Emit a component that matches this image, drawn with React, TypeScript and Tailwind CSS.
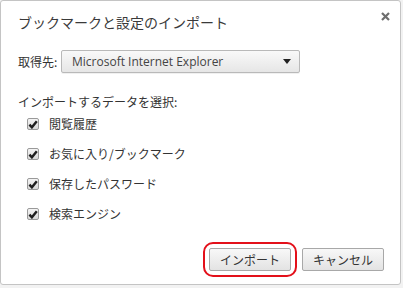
const jp = "font-['Noto_Sans_CJK_JP','Noto_Sans',sans-serif]";

function CheckBox() {
  return (
    <span className="flex h-[12px] w-[12px] items-center justify-center rounded-[2px] border border-[#9a9a9a] bg-gradient-to-b from-[#f4f4f4] to-[#d8d8d8]">
      <svg width="10" height="9" viewBox="0 0 10 9">
        <path d="M1.4 4.6 L3.9 7.3 L8.8 1.2" fill="none" stroke="#1e1e1e" strokeWidth="2.4" strokeLinejoin="miter" />
      </svg>
    </span>
  );
}

const items = ["閲覧履歴", "お気に入り/ブックマーク", "保存したパスワード", "検索エンジン"];

export default function App() {
  return (
    <div className={`h-[288px] w-[403px] bg-[#f2f2f2] ${jp}`}>
      <div className="relative flex h-[285px] w-[401px] flex-col rounded-[3px] border border-[#c4c4c4] bg-white text-[#333]">
        {/* close */}
        <button className="absolute right-[10px] top-[11px] flex h-[9px] w-[9px] items-center justify-center">
          <svg width="9" height="9" viewBox="0 0 9 9">
            <path d="M1 1 L8 8 M8 1 L1 8" stroke="#6e6e6e" strokeWidth="2.2" />
          </svg>
        </button>

        <div className="px-[17px] pt-[11px] text-[14px] leading-[20px] text-[#3a3a3a]">
          ブックマークと設定のインポート
        </div>

        <div className="mt-[18px] flex items-center px-[17px]">
          <span className="w-[43px] text-[12px] leading-[16px]">取得先:</span>
          <div className="flex h-[23px] w-[239px] items-center justify-between rounded-[2px] border border-[#b9b9b9] bg-gradient-to-b from-[#f9f9f9] to-[#e6e6e6] pl-[10px] pr-[8px] shadow-[0_1px_0_rgba(0,0,0,0.06)]">
            <span className="font-['Open_Sans','Noto_Sans',sans-serif] text-[12px] leading-[16px] text-[#444]">
              Microsoft Internet Explorer
            </span>
            <svg width="8" height="5" viewBox="0 0 8 5">
              <path d="M0 0 H8 L4 5 Z" fill="#222" />
            </svg>
          </div>
        </div>

        <div className="mt-[21px] px-[17px] text-[12px] leading-[15px]">
          インポートするデータを選択:
        </div>

        <div className="flex flex-col pl-[26px]">
          {items.map((t) => (
            <label key={t} className="flex h-[30px] items-center gap-[10px]">
              <CheckBox />
              <span className="text-[12px] leading-[16px] text-[#333]">{t}</span>
            </label>
          ))}
        </div>

        <div className="mt-auto flex justify-end gap-[11px] pb-[13px] pr-[16px]">
          <div className="relative">
            <span className="absolute -inset-x-[6px] -inset-y-[6px] rounded-[10px] border-[2.5px] border-[#e3101a]" />
            <button className="flex h-[23px] w-[82px] items-center justify-center rounded-[2px] border border-[#a8a8a8] bg-gradient-to-b from-[#f8f8f8] to-[#e3e3e3] text-[12px] leading-[16px] text-[#333]">
              インポート
            </button>
          </div>
          <button className="flex h-[23px] w-[82px] items-center justify-center rounded-[2px] border border-[#a8a8a8] bg-gradient-to-b from-[#f8f8f8] to-[#e3e3e3] text-[12px] leading-[16px] text-[#333]">
            キャンセル
          </button>
        </div>
      </div>
    </div>
  );
}
